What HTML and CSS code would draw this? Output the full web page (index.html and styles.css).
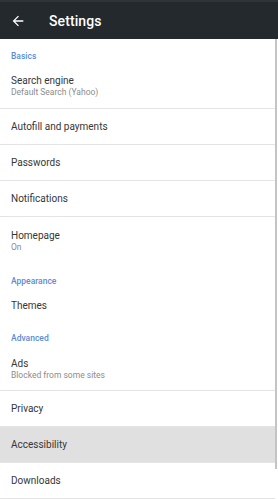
FILE: index.html
```html
<!DOCTYPE html>
<html>
<head>
<meta charset="utf-8">
<link rel="stylesheet" href="styles.css">
</head>
<body>
<div class="app">
  <header class="topbar">
    <svg class="back" width="16" height="16" viewBox="0 0 24 24"><path d="M20 11H7.83l5.59-5.59L12 4l-8 8 8 8 1.41-1.41L7.83 13H20v-2z" fill="#fff"/></svg>
    <span class="title">Settings</span>
  </header>
  <div class="content">
    <div class="list">
      <div class="section s-basics">Basics</div>
      <div class="row two search"><div class="t">Search engine</div><div class="s">Default Search (Yahoo)</div></div>
      <div class="row">Autofill and payments</div>
      <div class="row">Passwords</div>
      <div class="row">Notifications</div>
      <div class="row two nob home"><div class="t">Homepage</div><div class="s">On</div></div>
      <div class="section s-appearance">Appearance</div>
      <div class="row nob">Themes</div>
      <div class="section s-advanced">Advanced</div>
      <div class="row two ads"><div class="t">Ads</div><div class="s">Blocked from some sites</div></div>
      <div class="row">Privacy</div>
      <div class="row active">Accessibility</div>
      <div class="row">Downloads</div>
    </div>
    <div class="scrollbar"></div>
  </div>
</div>
</body>
</html>
```
FILE: styles.css
```css
* { box-sizing: border-box; }
html, body { margin: 0; padding: 0; background: #fff; }
body { font-family: Roboto, "Liberation Sans", sans-serif; width: 278px; height: 500px; overflow: hidden; }
.topbar {
  height: 39px;
  background: #23292d;
  border-top: 2px solid #2e3438;
  display: flex;
  align-items: center;
  padding-left: 10px;
}
.back { margin-right: 23px; }
.title { color: #fff; font-size: 14px; font-weight: 500; letter-spacing: 0.1px; }
.content { position: relative; }
.list { padding-right: 3px; }
.scrollbar { position: absolute; right: 1px; top: 0; width: 2px; height: 430px; background: #c4c4c4; }
.section {
  height: 25px;
  padding: 12px 11px 0;
  color: #5a8cd8;
  font-size: 8.5px;
  line-height: 10px;
  font-weight: 500;
}
.s-appearance { height: 22px; padding-top: 11px; }
.s-advanced { height: 25px; padding-top: 10px; }
.row {
  height: 36px;
  display: flex;
  flex-direction: column;
  justify-content: center;
  padding: 0 11px;
  font-size: 10px;
  color: #363636;
  border-bottom: 1px solid #e4e4e4;
}
.row.two { height: 44px; }
.row.search { height: 45px; }
.row.home { height: 48px; }
.row.ads { height: 43px; }
.row.nob { border-bottom: none; }
.row .t { font-size: 10px; color: #363636; line-height: 13px; }
.row .s { font-size: 8.5px; color: #8c8c8c; line-height: 11px; }
.row.active { background: #e0e0e0; }
```
